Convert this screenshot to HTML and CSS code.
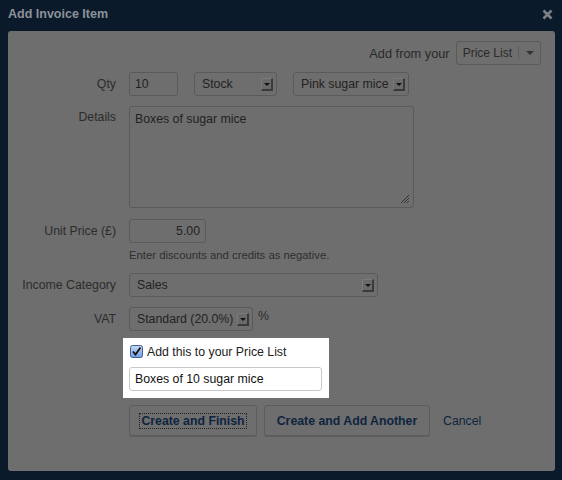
FILE: index.html
```html
<!DOCTYPE html>
<html>
<head>
<meta charset="utf-8">
<link rel="stylesheet" href="styles.css">
</head>
<body>
<div class="dialog">
  <div class="titlebar">
    <span class="title">Add Invoice Item</span>
    <svg class="close" width="11" height="11" viewBox="0 0 11 11"><path d="M1.5 1.5L9.5 9.5M9.5 1.5L1.5 9.5" stroke="#7c8087" stroke-width="2.6"/></svg>
  </div>
  <div class="panel">
    <div class="from-row">
      <span class="from-text">Add from your</span>
      <span class="split-btn"><span class="split-label">Price List</span><span class="split-caret"></span></span>
    </div>

    <div class="row row-qty">
      <label class="lbl">Qty</label>
      <div class="fields">
        <span class="input qty">10</span>
        <span class="select stock">Stock<span class="arrow"></span></span>
        <span class="select product">Pink sugar mice<span class="arrow"></span></span>
      </div>
    </div>

    <div class="row row-details">
      <label class="lbl lbl-top">Details</label>
      <div class="fields">
        <span class="textarea">Boxes of sugar mice
          <svg class="grip" width="10" height="10" viewBox="0 0 10 10"><path d="M9 1L1 9M9 4L4 9M9 7L7 9" stroke="#333" stroke-width="1"/></svg>
        </span>
      </div>
    </div>

    <div class="row row-price">
      <label class="lbl">Unit Price (£)</label>
      <div class="fields">
        <span class="input price">5.00</span>
      </div>
    </div>
    <div class="hint">Enter discounts and credits as negative.</div>

    <div class="row row-cat">
      <label class="lbl">Income Category</label>
      <div class="fields">
        <span class="select category">Sales<span class="arrow"></span></span>
      </div>
    </div>

    <div class="row row-vat">
      <label class="lbl">VAT</label>
      <div class="fields">
        <span class="select vat">Standard (20.0%)<span class="arrow"></span></span>
        <span class="pct">%</span>
      </div>
    </div>

    <div class="spotlight">
      <div class="check-row">
        <svg class="checkbox" width="13" height="13" viewBox="0 0 13 13">
          <defs><linearGradient id="cb" x1="0" y1="0" x2="0" y2="1"><stop offset="0" stop-color="#c9dcf5"/><stop offset="1" stop-color="#6e9be0"/></linearGradient></defs>
          <rect x="0.5" y="0.5" width="12" height="12" rx="2" fill="url(#cb)" stroke="#3d5f93"/>
          <path d="M3 6.5L5.5 9.5L10.5 2.5" fill="none" stroke="#111" stroke-width="1.8"/>
        </svg>
        <span class="check-label">Add this to your Price List</span>
      </div>
      <span class="input pl-name">Boxes of 10 sugar mice</span>
    </div>

    <div class="actions">
      <span class="btn btn-finish"><span class="focus">Create and Finish</span></span>
      <span class="btn btn-another">Create and Add Another</span>
      <span class="cancel">Cancel</span>
    </div>
  </div>
</div>
</body>
</html>
```
FILE: styles.css
```css
html, body {
  margin: 0;
  padding: 0;
  background: #0b1a2b;
  width: 562px;
  height: 480px;
  overflow: hidden;
  font-family: "Liberation Sans", Arial, sans-serif;
  font-size: 12.3px;
  color: #2c2c2c;
}
.dialog {
  width: 562px;
  height: 480px;
}
.titlebar {
  height: 31px;
  display: flex;
  align-items: center;
  justify-content: space-between;
  padding: 0 9px 0 8px;
  box-sizing: border-box;
}
.title {
  color: #8c929a;
  font-weight: bold;
  font-size: 12.5px;
  margin-top: -3px;
}
.close {
  margin-top: -2px;
}
.panel {
  margin-left: 8px;
  width: 547px;
  height: 440px;
  background: #6e6e6e;
  border-radius: 3px;
  box-sizing: border-box;
  padding-top: 10px;
  position: relative;
}
.from-row {
  display: flex;
  justify-content: flex-end;
  align-items: center;
  padding-right: 14px;
  height: 24px;
}
.from-text {
  margin-right: 6px;
  color: #2a2a2a;
  font-size: 12.8px;
}
.split-btn {
  display: flex;
  height: 24px;
  box-sizing: border-box;
  border: 1px solid #5a5a5a;
  border-radius: 3px;
  align-items: center;
  font-size: 12px;
  color: #2a2a2a;
}
.split-label {
  padding: 0 6px 0 6px;
  border-right: 1px solid #5f5f5f;
  height: 14px;
  line-height: 14px;
}
.split-caret {
  width: 21px;
  height: 14px;
  position: relative;
}
.split-caret::after {
  content: "";
  position: absolute;
  left: 7px;
  top: 5px;
  border-left: 4px solid transparent;
  border-right: 4px solid transparent;
  border-top: 4px solid #333;
}
.row {
  display: flex;
}
.lbl {
  width: 108px;
  text-align: right;
  flex: none;
  align-self: center;
  color: #2c2c2c;
}
.lbl-top {
  align-self: flex-start;
  margin-top: 4px;
}
.fields {
  margin-left: 13px;
  display: flex;
  align-items: center;
}
.row-qty { margin-top: 7px; }
.row-details { margin-top: 10px; }
.row-price { margin-top: 11px; }
.row-cat { margin-top: 10px; }
.row-vat { margin-top: 10px; }

.input, .select, .textarea {
  box-sizing: border-box;
  border: 1px solid #5a5a5a;
  border-radius: 3px;
  height: 24px;
  display: flex;
  align-items: center;
  color: #222;
  position: relative;
}
.input { padding: 0 5px; }
.qty { width: 49px; }
.price { width: 77px; justify-content: flex-end; }
.select { padding-left: 7px; }
.stock { width: 83px; margin-left: 16px; }
.product { width: 116px; margin-left: 16px; }
.category { width: 249px; }
.vat { width: 124px; padding-left: 7px; }
.arrow {
  position: absolute;
  right: 3px;
  top: 5px;
  width: 12px;
  height: 13px;
  box-sizing: border-box;
  border-right: 2px solid #3a3a3a;
  border-bottom: 2px solid #3a3a3a;
  border-top: 1px solid #7a7a7a;
  border-left: 1px solid #7a7a7a;
  background: #6a6a6a;
}
.arrow::after {
  content: "";
  position: absolute;
  left: 2px;
  top: 4px;
  border-left: 3px solid transparent;
  border-right: 3px solid transparent;
  border-top: 3px solid #111;
}
.textarea {
  width: 285px;
  height: 102px;
  align-items: flex-start;
  padding: 5px 5px;
}
.grip {
  position: absolute;
  right: 3px;
  bottom: 3px;
}
.hint {
  margin-left: 121px;
  margin-top: 5px;
  font-size: 11.3px;
  color: #2e2e2e;
  line-height: 15px;
}
.pct {
  margin-left: 5px;
  margin-top: -6px;
}
.spotlight {
  margin-top: 7px;
  margin-left: 115px;
  width: 206px;
  height: 60px;
  background: #fff;
  box-sizing: border-box;
  padding: 6px 7px 0 6px;
}
.check-row {
  display: flex;
  align-items: center;
  height: 15px;
  margin-left: 1px;
}
.checkbox {
  flex: none;
}
.check-label {
  margin-left: 4px;
  color: #222;
}
.pl-name {
  margin-top: 8px;
  width: 193px;
  border-color: #c8c8c8;
  background: #fff;
  color: #111;
}
.actions {
  display: flex;
  align-items: center;
  margin-left: 121px;
  margin-top: 7px;
}
.btn {
  box-sizing: border-box;
  height: 31px;
  border: 1px solid #5c5c5c;
  border-radius: 3px;
  box-shadow: 0 1px 0 #5e5e5e;
  display: flex;
  align-items: center;
  justify-content: center;
  font-weight: bold;
  color: #0e2440;
}
.btn-finish { width: 128px; }
.btn-another { width: 166px; margin-left: 7px; }
.focus {
  outline: 1px dotted #222;
  padding: 0 1px;
}
.cancel {
  margin-left: 13px;
  color: #0e2440;
}
```
